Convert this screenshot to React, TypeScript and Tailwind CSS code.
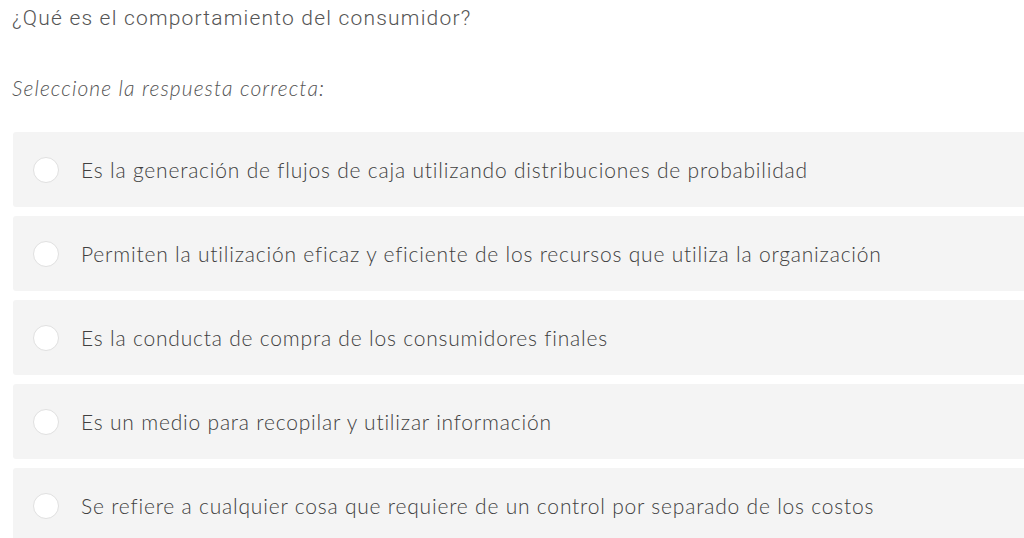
import React from 'react';

const options = [
  'Es la generación de flujos de caja utilizando distribuciones de probabilidad',
  'Permiten la utilización eficaz y eficiente de los recursos que utiliza la organización',
  'Es la conducta de compra de los consumidores finales',
  'Es un medio para recopilar y utilizar información',
  'Se refiere a cualquier cosa que requiere de un control por separado de los costos',
];

export default function App() {
  return (
    <div className="min-h-screen bg-white pl-[13px] pt-[4px] overflow-hidden">
      <h2 className="font-['Roboto',sans-serif] font-light text-[21px] leading-[28px] tracking-[1.2px] text-[#555555] -ml-px">
        ¿Qué es el comportamiento del consumidor?
      </h2>
      <p className="mt-[42px] font-['Lato',sans-serif] font-light italic text-[21px] leading-[28px] tracking-[1.1px] text-[#555555] -ml-px">
        Seleccione la respuesta correcta:
      </p>
      <div className="mt-[30px] flex flex-col gap-[9px] w-[1030px]">
        {options.map((text) => (
          <label
            key={text}
            className="flex items-center h-[75px] rounded-[3px] bg-[#f4f4f4] pl-[20px]"
          >
            <span className="w-[26px] h-[26px] rounded-full bg-white border border-[#e0e0e0] shrink-0" />
            <span className="ml-[22px] font-['Lato',sans-serif] font-light text-[21px] tracking-[0.8px] text-[#404040]">
              {text}
            </span>
          </label>
        ))}
      </div>
    </div>
  );
}
